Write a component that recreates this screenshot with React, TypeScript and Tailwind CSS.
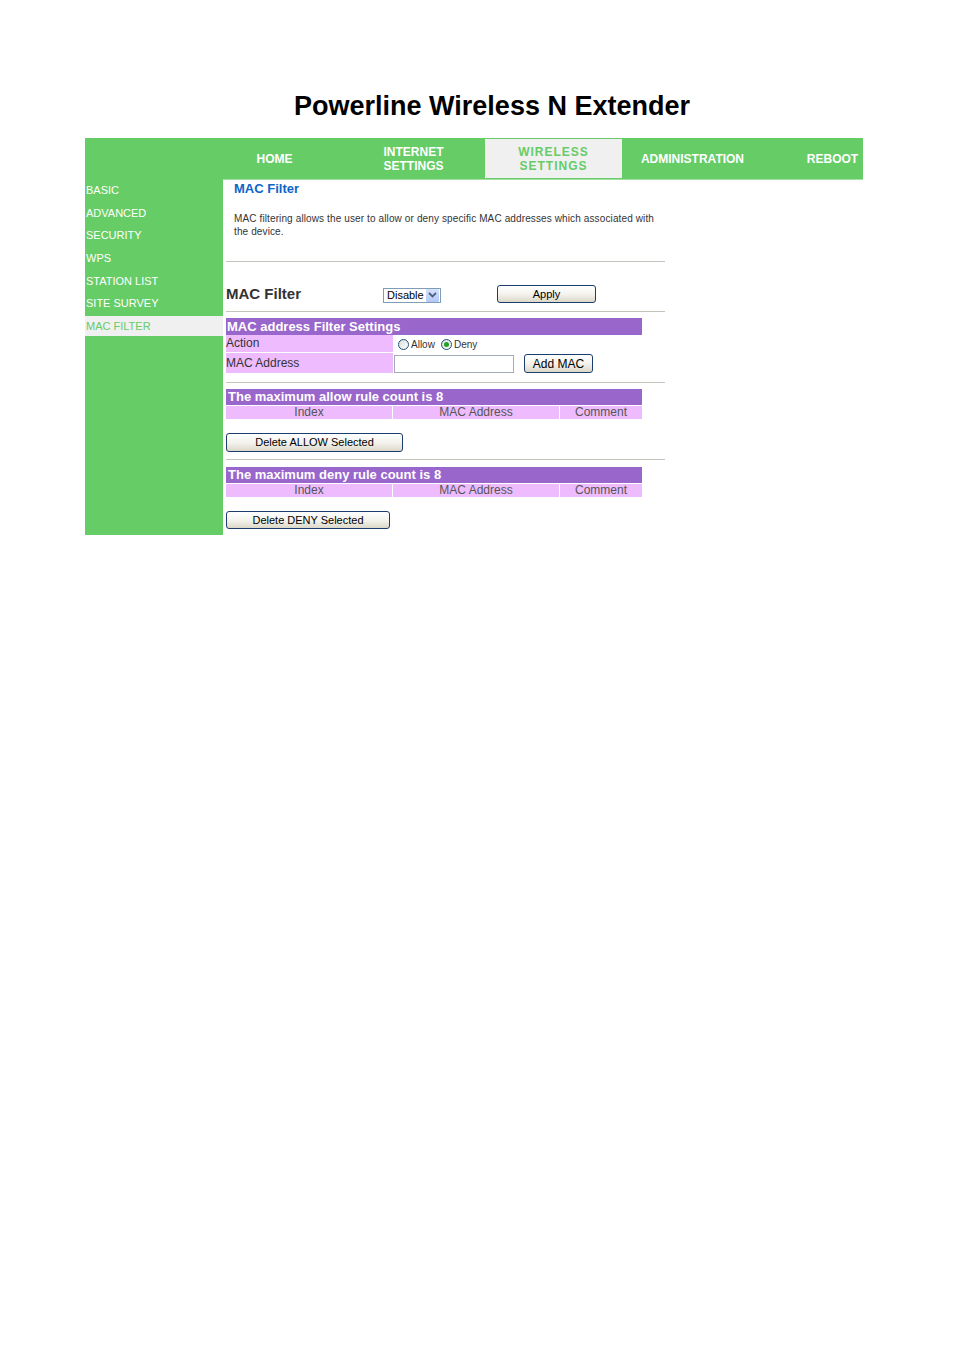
import React from "react";

const Btn = ({ children, className }: { children: React.ReactNode; className: string }) => (
  <div
    className={
      "flex items-center justify-center rounded-[3px] border border-[#1c3e6e] bg-gradient-to-b from-[#ffffff] via-[#f4f3ee] to-[#dcd8c8] text-[11px] leading-none text-black " +
      className
    }
  >
    {children}
  </div>
);

const Radio = ({ checked }: { checked?: boolean }) => (
  <span className="flex h-[11px] w-[11px] items-center justify-center rounded-full border border-[#1c5180] bg-gradient-to-br from-[#dcdcd6] to-white">
    {checked ? <span className="h-[5px] w-[5px] rounded-full bg-[#21a121]" /> : null}
  </span>
);

const RuleTable = ({ title }: { title: string }) => (
  <div className="w-[416px]">
    <div className="h-[16px] bg-[#9966cc] pl-[2px] text-[13px] font-bold leading-[16px] text-white">{title}</div>
    <div className="mt-[1px] flex h-[13px] gap-[1px] text-[12px] leading-[13px] text-[#555555]">
      <div className="w-[166px] bg-[#eebbff] text-center">Index</div>
      <div className="w-[166px] bg-[#eebbff] text-center">MAC Address</div>
      <div className="flex-1 bg-[#eebbff] text-center">Comment</div>
    </div>
  </div>
);

const Hr = () => <div className="h-px w-[439px] bg-[#c4c4bc]" />;

export default function App() {
  const side = ["BASIC", "ADVANCED", "SECURITY", "WPS", "STATION LIST", "SITE SURVEY"];
  return (
    <div className="h-[1350px] w-[954px] bg-white font-['Liberation_Sans',Arial,sans-serif]">
      <div className="flex h-[138px] items-end justify-center pb-[16px] pl-[30px]">
        <h1 className="text-[27px] font-bold leading-[32px] text-black">Powerline Wireless N Extender</h1>
      </div>
      <div className="ml-[85px] w-[778px]">
        {/* top nav */}
        <div className="flex h-[41px] overflow-hidden bg-[#66cc66] text-[12px] font-bold leading-[14px] text-white">
          <div className="w-[120px] shrink-0" />
          <div className="flex w-[139px] shrink-0 items-center justify-center">HOME</div>
          <div className="flex w-[139px] shrink-0 items-center justify-center text-center">
            INTERNET
            <br />
            SETTINGS
          </div>
          <div className="flex w-[139px] shrink-0 py-[1px] pl-[2px] pr-[0px]">
            <div className="flex flex-1 items-center justify-center bg-[#f0f0f0] text-center tracking-[1px] text-[#66cc66]">
              WIRELESS
              <br />
              SETTINGS
            </div>
          </div>
          <div className="flex w-[139px] shrink-0 items-center justify-center pl-[2px]">ADMINISTRATION</div>
          <div className="flex w-[139px] shrink-0 items-center justify-center pl-[4px]">REBOOT</div>
        </div>
        <div className="flex">
          {/* sidebar */}
          <div className="w-[138px] shrink-0 bg-[#66cc66] text-[11px] text-white">
            {side.map((s) => (
              <div key={s} className="flex h-[22.67px] items-center pl-[1px]">
                {s}
              </div>
            ))}
            <div className="flex h-[22.67px] items-center">
              <div className="flex h-[20px] w-full items-center bg-[#f0f0f0] pl-[1px] text-[#66cc66]">MAC FILTER</div>
            </div>
          </div>
          {/* content */}
          <div className="flex-1 border-t border-[#a6dfa6] pb-[6px]">
            <div className="pl-[11px] pt-[1px] text-[13px] font-bold leading-[16px] text-[#0d64c8]">MAC Filter</div>
            <div className="mt-[15px] whitespace-nowrap pl-[11px] text-[10px] leading-[13px] tracking-[0.12px] text-[#333333]">
              MAC filtering allows the user to allow or deny specific MAC addresses which associated with
              <br />
              the device.
            </div>
            <div className="pl-[3px]">
              <div className="mt-[23px]">
                <Hr />
              </div>
              <div className="mt-[23px] flex h-[18px] items-center">
                <div className="w-[157px] text-[15px] font-bold leading-[18px] text-[#333333]">MAC Filter</div>
                <div className="mt-[2px] flex h-[15px] w-[58px] items-center justify-between border border-[#7f9db9] bg-white pl-[3px] pr-[1px] text-[11px] leading-none text-black">
                  <span>Disable</span>
                  <span className="flex h-[13px] w-[13px] items-center justify-center rounded-[1px] bg-gradient-to-b from-[#d6e2fb] to-[#b4c8f5]">
                    <svg width="9" height="6" viewBox="0 0 9 6">
                      <path d="M1 1 L4.5 4.5 L8 1" stroke="#4d6185" strokeWidth="1.8" fill="none" />
                    </svg>
                  </span>
                </div>
                <Btn className="ml-[56px] h-[18px] w-[99px]">Apply</Btn>
              </div>
              <div className="mt-[8px]">
                <Hr />
              </div>
              <div className="mt-[6px] w-[416px]">
                <div className="h-[17px] bg-[#9966cc] pl-[1px] text-[13px] font-bold leading-[17px] text-white">
                  MAC address Filter Settings
                </div>
                <div className="flex h-[17px]">
                  <div className="w-[167px] bg-[#eebbff] text-[12px] leading-[17px] text-[#333333]">Action</div>
                  <div className="flex items-center pl-[5px] pt-[2px] text-[10px] text-[#333333]">
                    <Radio />
                    <span className="ml-[2px]">Allow</span>
                    <span className="ml-[6px]">
                      <Radio checked />
                    </span>
                    <span className="ml-[2px]">Deny</span>
                  </div>
                </div>
                <div className="mt-[1px] flex h-[20px]">
                  <div className="w-[167px] bg-[#eebbff] text-[12px] leading-[20px] text-[#333333]">MAC Address</div>
                  <div className="ml-[1px] mt-[2px] h-[18px] w-[120px] border border-[#a5acb5] bg-white" />
                  <Btn className="ml-[10px] mt-[1px] h-[19px] w-[69px] text-[12px]">Add MAC</Btn>
                </div>
              </div>
              <div className="mt-[9px]">
                <Hr />
              </div>
              <div className="mt-[6px]">
                <RuleTable title="The maximum allow rule count is 8" />
              </div>
              <Btn className="mt-[14px] h-[19px] w-[177px]">Delete ALLOW Selected</Btn>
              <div className="mt-[7px]">
                <Hr />
              </div>
              <div className="mt-[7px]">
                <RuleTable title="The maximum deny rule count is 8" />
              </div>
              <Btn className="mt-[14px] h-[18px] w-[164px]">Delete DENY Selected</Btn>
            </div>
          </div>
        </div>
      </div>
    </div>
  );
}
